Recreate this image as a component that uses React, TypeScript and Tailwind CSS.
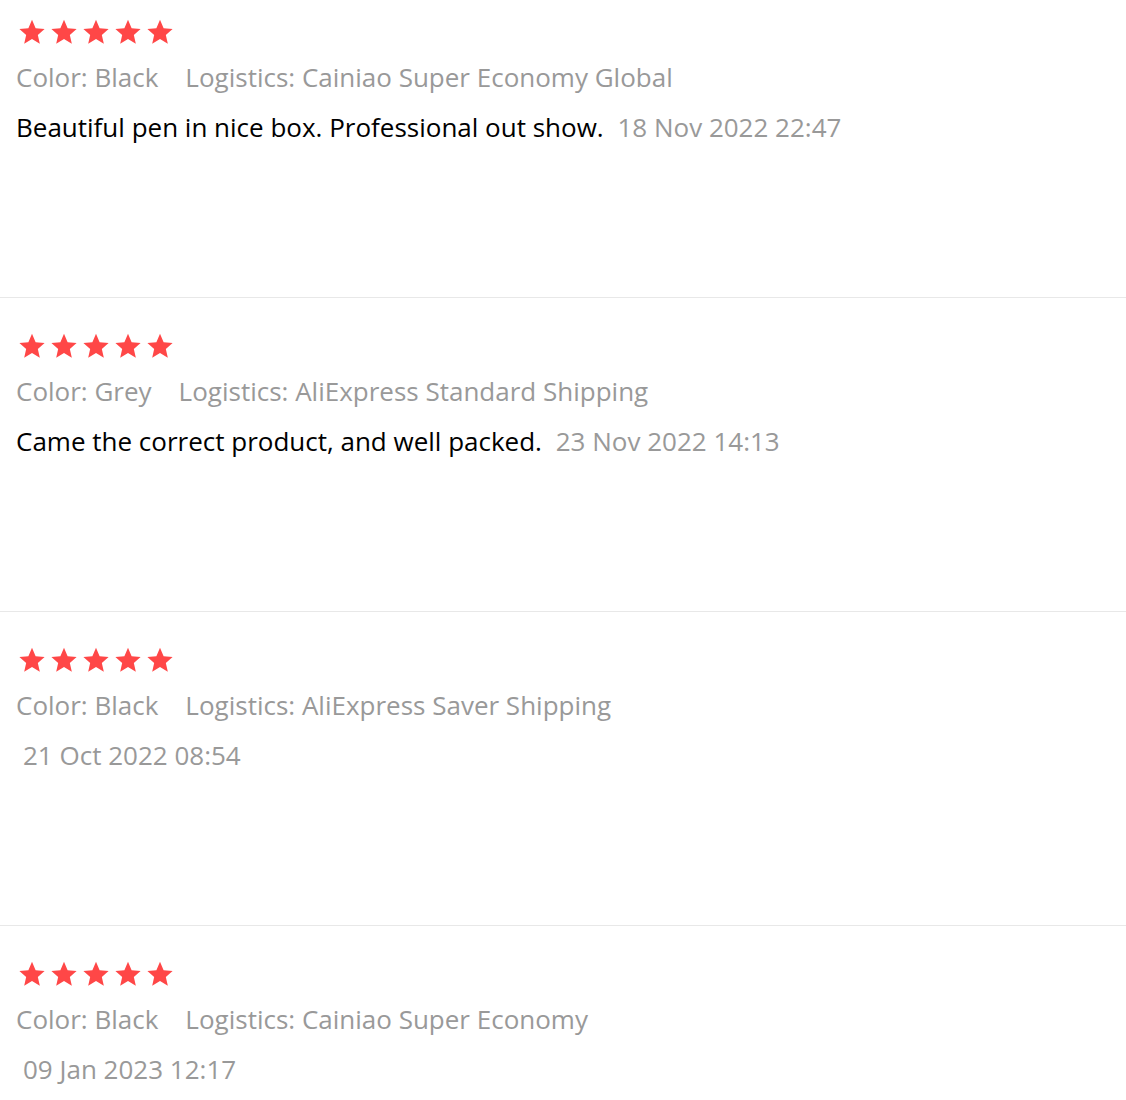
const reviews = [
  {
    color: "Black",
    logistics: "Cainiao Super Economy Global",
    text: "Beautiful pen in nice box. Professional out show.",
    date: "18 Nov 2022 22:47",
  },
  {
    color: "Grey",
    logistics: "AliExpress Standard Shipping",
    text: "Came the correct product, and well packed.",
    date: "23 Nov 2022 14:13",
  },
  {
    color: "Black",
    logistics: "AliExpress Saver Shipping",
    text: "",
    date: "21 Oct 2022 08:54",
  },
  {
    color: "Black",
    logistics: "Cainiao Super Economy",
    text: "",
    date: "09 Jan 2023 12:17",
  },
];

function Star() {
  return (
    <svg viewBox="0 0 24 24" className="w-[28px] h-[28px]" fill="#ff4747">
      <path d="M12 1.6l3.1 7.1 7.7.7-5.8 5.1 1.7 7.6L12 18.1l-6.7 4 1.7-7.6-5.8-5.1 7.7-.7z" />
    </svg>
  );
}

export default function App() {
  return (
    <div
      className="w-[1126px] bg-white flex flex-col gap-[16px]"
      style={{ fontFamily: '"Open Sans", sans-serif' }}
    >
      {reviews.map((r, i) => (
        <div
          key={i}
          className="h-[298px] shrink-0 border-b border-[#e8e8e8] pt-[18px] pl-[16px]"
        >
          {/* Stars */}
          <div className="flex gap-[4px] pl-[2px] mb-[13px]">
            {[0, 1, 2, 3, 4].map((s) => (
              <Star key={s} />
            ))}
          </div>

          {/* Meta */}
          <div className="flex gap-[27px] text-[26px] leading-[36px] text-[#999]">
            <span>Color: {r.color}</span>
            <span>Logistics: {r.logistics}</span>
          </div>

          {/* Review */}
          <div className="mt-[14px] text-[26px] leading-[36px] text-black">
            {r.text}
            <span className="ml-[7px] text-[#999]"> {r.date}</span>
          </div>
        </div>
      ))}
    </div>
  );
}
